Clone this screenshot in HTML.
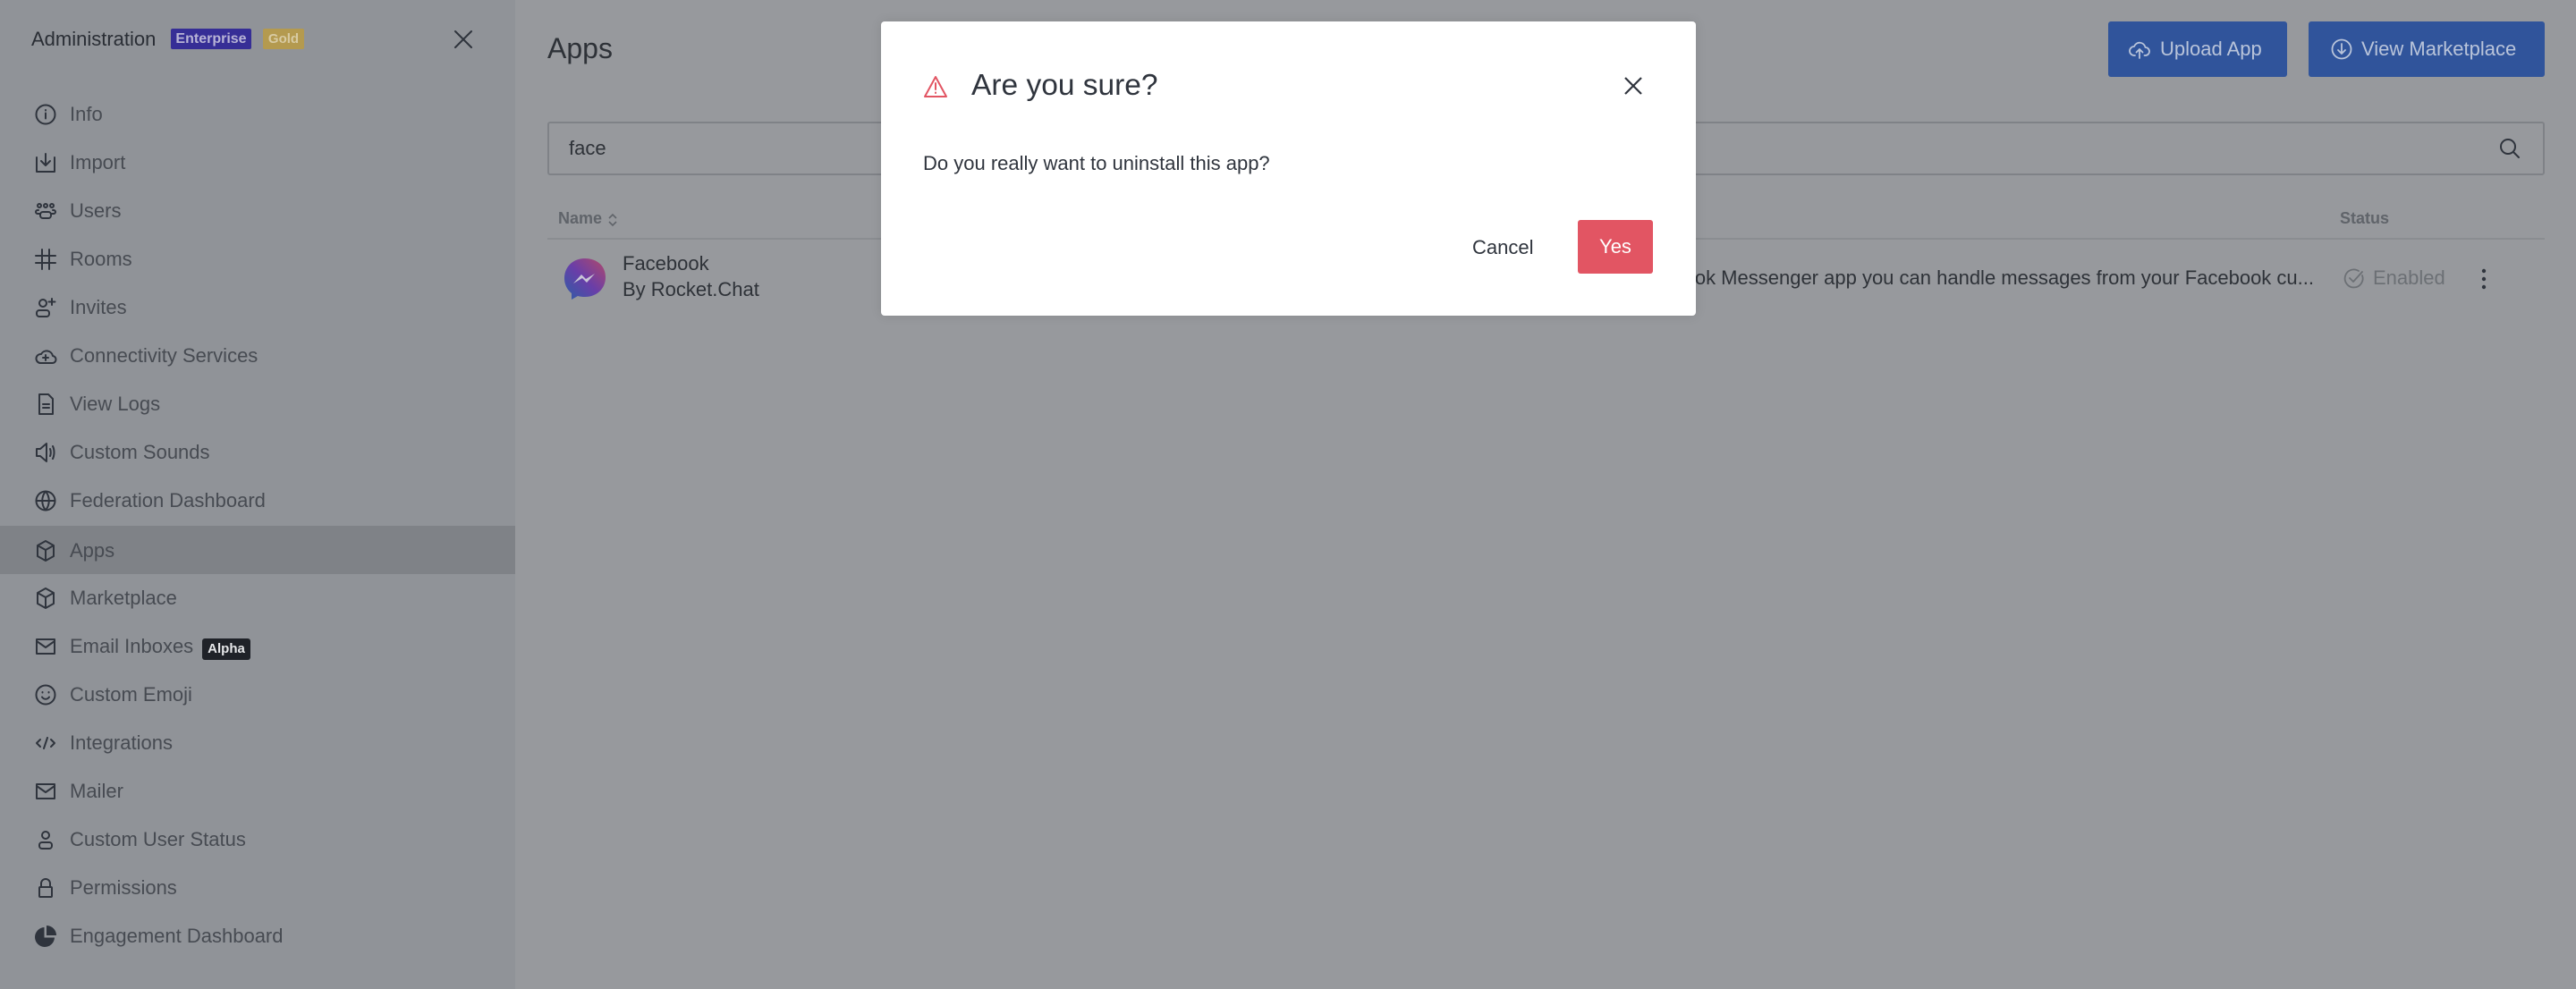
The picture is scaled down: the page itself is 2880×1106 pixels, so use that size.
<!DOCTYPE html>
<html><head><meta charset="utf-8"><style>
*{margin:0;padding:0;box-sizing:border-box}
body{width:2880px;height:1106px;overflow:hidden;background:#97999d;font-family:"Liberation Sans",sans-serif;position:relative}
.a{position:absolute;white-space:nowrap}
#side{position:absolute;left:0;top:0;width:576px;height:1106px;background:#909398}
.item{position:absolute;left:0;width:576px;height:54px}
.item svg{position:absolute;left:37px;top:14px}
.item span{position:absolute;left:78px;top:15px;font-size:22px;color:#474b52}
.ic{fill:none;stroke:#2f343d;stroke-width:2;stroke-linecap:round;stroke-linejoin:round}
</style></head><body>
<div id="side">
<div class="a" style="left:35px;top:31px;font-size:22px;color:#2a2e35">Administration</div>
<div class="a" style="left:191px;top:32px;width:90px;height:23px;background:#362e96;border-radius:2px;color:#b8b4d6;font-size:16px;font-weight:bold;text-align:center;line-height:23px">Enterprise</div>
<div class="a" style="left:294px;top:32px;width:46px;height:23px;background:#b49a4f;border-radius:2px;color:#d8cba3;font-size:15px;font-weight:bold;text-align:center;line-height:23px">Gold</div>
<svg class="a" style="left:506px;top:32px" width="24" height="24" viewBox="0 0 24 24"><path class="ic" d="M3 3L21 21M21 3L3 21"/></svg>

<div class="item" style="top:100px"><svg width="28" height="28" viewBox="0 0 28 28"><g class="ic"><circle cx="14" cy="14" r="10.5"/><path d="M14 12.5v6M14 9v.5"/></g></svg><span>Info</span></div>
<div class="item" style="top:154px"><svg width="28" height="28" viewBox="0 0 28 28"><g class="ic"><path d="M4 8v16h20V8M14 4v13M9 12l5 5 5-5"/></g></svg><span>Import</span></div>
<div class="item" style="top:208px"><svg width="28" height="28" viewBox="0 0 28 28"><g class="ic"><circle cx="7" cy="8" r="2"/><circle cx="14" cy="8" r="2"/><circle cx="21" cy="8" r="2"/><rect x="8" y="15" width="12" height="7" rx="3"/><path d="M6 13H5a2 2 0 0 0 0 4h3M22 13h1a2 2 0 0 1 0 4h-3"/></g></svg><span>Users</span></div>
<div class="item" style="top:262px"><svg width="28" height="28" viewBox="0 0 28 28"><g class="ic" stroke-width="2.4"><path d="M10 3v22M18 3v22M3 10h22M3 18h22"/></g></svg><span>Rooms</span></div>
<div class="item" style="top:316px"><svg width="28" height="28" viewBox="0 0 28 28"><g class="ic"><circle cx="11" cy="9" r="4"/><rect x="4" y="17" width="14" height="7" rx="3"/><path d="M21 4v7M17.5 7.5h7"/></g></svg><span>Invites</span></div>
<div class="item" style="top:370px"><svg width="28" height="28" viewBox="0 0 28 28"><g class="ic"><path d="M8 22h13a4 4 0 0 0 1-8 7 7 0 0 0-13-2 5 5 0 0 0-1 10zM14 13v6M11 16h6"/></g></svg><span>Connectivity Services</span></div>
<div class="item" style="top:424px"><svg width="28" height="28" viewBox="0 0 28 28"><g class="ic"><path d="M7 3h10l5 5v17H7zM11 14h7M11 18h7"/></g></svg><span>View Logs</span></div>
<div class="item" style="top:478px"><svg width="28" height="28" viewBox="0 0 28 28"><g class="ic"><path d="M4 10h4l7-6v20l-7-6H4zM19 10c1 2 1 6 0 8M22 7c2 4 2 10 0 14"/></g></svg><span>Custom Sounds</span></div>
<div class="item" style="top:532px"><svg width="28" height="28" viewBox="0 0 28 28"><g class="ic"><circle cx="14" cy="14" r="10.5"/><path d="M3.5 14h21M14 3.5c-5 6-5 15 0 21M14 3.5c5 6 5 15 0 21"/></g></svg><span>Federation Dashboard</span></div>
<div class="item" style="top:588px;background:#7f8287"><svg width="28" height="28" viewBox="0 0 28 28"><g class="ic"><path d="M14 3l9 5v12l-9 5-9-5V8zM5 8l9 5 9-5M14 13v12"/></g></svg><span>Apps</span></div>
<div class="item" style="top:641px"><svg width="28" height="28" viewBox="0 0 28 28"><g class="ic"><path d="M14 3l9 5v12l-9 5-9-5V8zM5 8l9 5 9-5M14 13v12"/></g></svg><span>Marketplace</span></div>
<div class="item" style="top:695px"><svg width="28" height="28" viewBox="0 0 28 28"><g class="ic"><rect x="4" y="6" width="20" height="16"/><path d="M4 8l10 7 10-7"/></g></svg><span>Email Inboxes</span></div>
<div class="a" style="left:226px;top:714px;width:54px;height:24px;background:#1f2228;border-radius:3px;color:#e6e7e9;font-size:15px;font-weight:bold;text-align:center;line-height:24px">Alpha</div>
<div class="item" style="top:749px"><svg width="28" height="28" viewBox="0 0 28 28"><g class="ic"><circle cx="14" cy="14" r="10.5"/><path d="M10 16.5c2 3 6 3 8 0M10.5 11v.5M17.5 11v.5"/></g></svg><span>Custom Emoji</span></div>
<div class="item" style="top:803px"><svg width="28" height="28" viewBox="0 0 28 28"><g class="ic"><path d="M8 10l-4 4 4 4M20 10l4 4-4 4M16 8l-4 12"/></g></svg><span>Integrations</span></div>
<div class="item" style="top:857px"><svg width="28" height="28" viewBox="0 0 28 28"><g class="ic"><rect x="4" y="6" width="20" height="16"/><path d="M4 8l10 7 10-7"/></g></svg><span>Mailer</span></div>
<div class="item" style="top:911px"><svg width="28" height="28" viewBox="0 0 28 28"><g class="ic"><circle cx="14" cy="9" r="4"/><rect x="7" y="17" width="14" height="7" rx="3"/></g></svg><span>Custom User Status</span></div>
<div class="item" style="top:965px"><svg width="28" height="28" viewBox="0 0 28 28"><g class="ic"><rect x="7" y="13" width="14" height="11" rx="1"/><path d="M9 13V9a5 5 0 0 1 10 0v4"/></g></svg><span>Permissions</span></div>
<div class="item" style="top:1019px"><svg width="28" height="28" viewBox="0 0 28 28"><path d="M12.5 4A11 11 0 1 0 24 15.5H12.5z" fill="#2f343d"/><path d="M15 2a11 11 0 0 1 11 11H15z" fill="#2f343d"/></svg><span>Engagement Dashboard</span></div>
</div>

<!-- main -->
<div class="a" style="left:612px;top:36px;font-size:32px;color:#2e3238">Apps</div>
<div class="a" style="left:2357px;top:24px;width:200px;height:62px;background:#30549b;border-radius:3px;color:#b9c4da;font-size:22px;line-height:62px;padding-left:58px">Upload App</div>
<svg class="a" style="left:2379px;top:42px" width="26" height="26" viewBox="0 0 26 26"><g fill="none" stroke="#b9c4da" stroke-width="1.8" stroke-linecap="round" stroke-linejoin="round"><path d="M8 20H7a5 5 0 0 1 0-10 6.5 6.5 0 0 1 12.5 1 4 4 0 0 1 0 9h-1M13 23V13M9.5 16.5L13 13l3.5 3.5"/></g></svg>
<div class="a" style="left:2581px;top:24px;width:264px;height:62px;background:#30549b;border-radius:3px;color:#b9c4da;font-size:22px;line-height:62px;padding-left:59px">View Marketplace</div>
<svg class="a" style="left:2605px;top:42px" width="26" height="26" viewBox="0 0 26 26"><g fill="none" stroke="#b9c4da" stroke-width="1.8" stroke-linecap="round" stroke-linejoin="round"><circle cx="13" cy="13" r="10.5"/><path d="M13 7v11M9 14l4 4 4-4"/></g></svg>

<div class="a" style="left:612px;top:136px;width:2233px;height:60px;border:2px solid #7f8287;border-radius:3px"></div>
<div class="a" style="left:636px;top:153px;font-size:22px;color:#2e3238">face</div>
<svg class="a" style="left:2792px;top:152px" width="28" height="28" viewBox="0 0 28 28"><g fill="none" stroke="#2f343d" stroke-width="2" stroke-linecap="round"><circle cx="12" cy="12" r="8"/><path d="M18 18l6 6"/></g></svg>

<div class="a" style="left:624px;top:234px;font-size:18px;font-weight:bold;color:#60646a">Name</div>
<svg class="a" style="left:679px;top:237px" width="12" height="18" viewBox="0 0 12 18"><path d="M2 7l4-4 4 4M2 11l4 4 4-4" fill="none" stroke="#60646a" stroke-width="1.6"/></svg>
<div class="a" style="left:2616px;top:234px;font-size:18px;font-weight:bold;color:#60646a">Status</div>
<div class="a" style="left:612px;top:266px;width:2233px;height:2px;background:#8a8d91"></div>

<svg class="a" style="left:629px;top:287px" width="50" height="50" viewBox="0 0 50 50"><defs><linearGradient id="g" x1="0" y1="1" x2="1" y2="0"><stop offset="0" stop-color="#2d5ea6"/><stop offset=".5" stop-color="#6a3ea8"/><stop offset="1" stop-color="#b04a6a"/></linearGradient></defs><path d="M25 2C12 2 2 11 2 24c0 7 3 13 8 17v7l7-4c2.5 .7 5 1 8 1 13 0 23-9 23-22S38 2 25 2z" fill="url(#g)"/><path d="M12 30l9-10 5 5 10-6-9 10-5-5z" fill="#c9c6d6"/></svg>
<div class="a" style="left:696px;top:282px;font-size:22px;color:#2e3238">Facebook</div>
<div class="a" style="left:696px;top:311px;font-size:22px;color:#2e3238">By Rocket.Chat</div>
<div class="a" style="right:293px;top:298px;font-size:22px;color:#2e3238">With Facebook Messenger app you can handle messages from your Facebook cu...</div>
<svg class="a" style="left:2618px;top:298px" width="28" height="28" viewBox="0 0 28 28"><g fill="none" stroke="#6c7075" stroke-width="1.8" stroke-linecap="round" stroke-linejoin="round"><path d="M23 10a10 10 0 1 1-4-5"/><path d="M9 13l4 4 10-11"/></g></svg>
<div class="a" style="left:2653px;top:298px;font-size:22px;color:#6c7075">Enabled</div>
<svg class="a" style="left:2770px;top:298px" width="14" height="28" viewBox="0 0 14 28"><g fill="#2f343d"><circle cx="7" cy="5" r="2.2"/><circle cx="7" cy="14" r="2.2"/><circle cx="7" cy="23" r="2.2"/></g></svg>

<!-- modal -->
<div class="a" style="left:985px;top:24px;width:911px;height:329px;background:#fff;border-radius:4px;box-shadow:0 0 12px rgba(0,0,0,.1)"></div>
<svg class="a" style="left:1032px;top:84px" width="28" height="26" viewBox="0 0 28 26"><g fill="none" stroke="#e25563" stroke-width="2" stroke-linejoin="round" stroke-linecap="round"><path d="M14 2L26 24H2z"/><path d="M14 9v7M14 19.5v.5"/></g></svg>
<div class="a" style="left:1086px;top:77px;font-size:33.5px;color:#2f343d">Are you sure?</div>
<svg class="a" style="left:1815px;top:85px" width="22" height="22" viewBox="0 0 22 22"><path d="M2 2l18 18M20 2L2 20" stroke="#2f343d" stroke-width="2.2" fill="none"/></svg>
<div class="a" style="left:1032px;top:170px;font-size:22px;color:#2f343d">Do you really want to uninstall this app?</div>
<div class="a" style="left:1646px;top:264px;font-size:22px;color:#2f343d">Cancel</div>
<div class="a" style="left:1764px;top:246px;width:84px;height:60px;background:#e25563;border-radius:3px;color:#fff;font-size:22px;line-height:60px;text-align:center">Yes</div>
</body></html>
